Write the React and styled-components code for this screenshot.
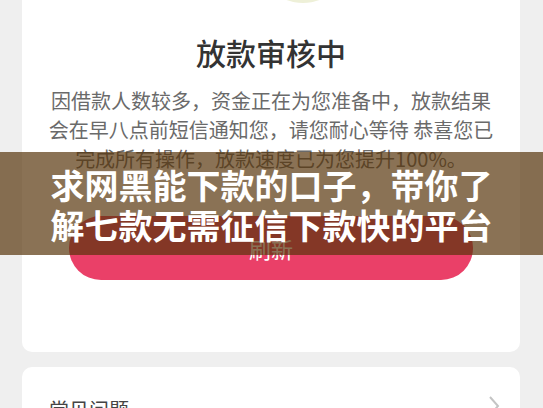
import React from 'react';
import styled, { createGlobalStyle } from 'styled-components';

const GlobalStyle = createGlobalStyle`
  html, body {
    margin: 0;
    padding: 0;
    background: #efefef;
  }
  body {
    font-family: "Noto Sans CJK SC", "Noto Sans", sans-serif;
    overflow: hidden;
  }
`;

const Page = styled.div`
  position: relative;
  width: 543px;
  height: 408px;
  padding: 0 23px 0 22px;
  box-sizing: border-box;
  background: #efefef;
  display: flex;
  flex-direction: column;
  gap: 15px;
  overflow: hidden;
`;

const StatusCard = styled.div`
  flex-shrink: 0;
  background: #ffffff;
  border-radius: 0 0 10px 10px;
  padding: 0 24px 72px;
  display: flex;
  flex-direction: column;
  align-items: center;
`;

const Illustration = styled.svg`
  display: block;
  width: 120px;
  height: 4px;
  margin-left: 64px;
`;

const Title = styled.h2`
  margin: 28px 0 0;
  font-size: 30px;
  line-height: 40px;
  font-weight: 500;
  color: #333333;
`;

const Message = styled.p`
  margin: 14px 0 0;
  width: 450px;
  font-size: 20px;
  line-height: 29px;
  color: #6a6a6a;
  text-align: center;
`;

const PrimaryButton = styled.button`
  margin-top: 43px;
  width: 404px;
  height: 64px;
  border: none;
  border-radius: 32px;
  background: #ea4068;
  color: #ffffff;
  font-family: inherit;
  font-size: 22px;
  cursor: pointer;
`;

const LinkCard = styled.div`
  flex-shrink: 0;
  background: #ffffff;
  border-radius: 10px;
  height: 84px;
  padding: 0 20px 0 27px;
  display: flex;
  align-items: center;
  justify-content: space-between;
`;

const LinkLabel = styled.span`
  font-size: 20px;
  color: #444444;
`;

const Chevron = styled.svg`
  width: 12px;
  height: 24px;
  margin-top: -6px;
`;

const Banner = styled.div`
  position: absolute;
  left: 0;
  right: 0;
  top: 152px;
  height: 103px;
  background: rgba(86, 50, 8, 0.69);
  display: flex;
  align-items: center;
  justify-content: center;
`;

const BannerText = styled.div`
  width: 450px;
  font-size: 34px;
  line-height: 40px;
  font-weight: 700;
  color: #ffffff;
  text-align: center;
  margin-top: 2px;
`;

const App = () => {
  return (
    <>
      <GlobalStyle />
      <Page>
        <StatusCard>
          <Illustration viewBox="0 0 120 4">
            <ellipse cx="60" cy="-6" rx="22" ry="9" fill="#eef0d8" />
          </Illustration>
          <Title>放款审核中</Title>
          <Message>
            因借款人数较多，资金正在为您准备中，放款结果会在早八点前短信通知您，请您耐心等待 恭喜您已完成所有操作，放款速度已为您提升100%。
          </Message>
          <PrimaryButton>刷新</PrimaryButton>
        </StatusCard>
        <LinkCard>
          <LinkLabel>常见问题</LinkLabel>
          <Chevron viewBox="0 0 12 24">
            <path d="M2 3 L10 12 L2 21" fill="none" stroke="#c4c4c4" strokeWidth="2" />
          </Chevron>
        </LinkCard>
        <Banner>
          <BannerText>求网黑能下款的口子，带你了解七款无需征信下款快的平台</BannerText>
        </Banner>
      </Page>
    </>
  );
};

export default App;
